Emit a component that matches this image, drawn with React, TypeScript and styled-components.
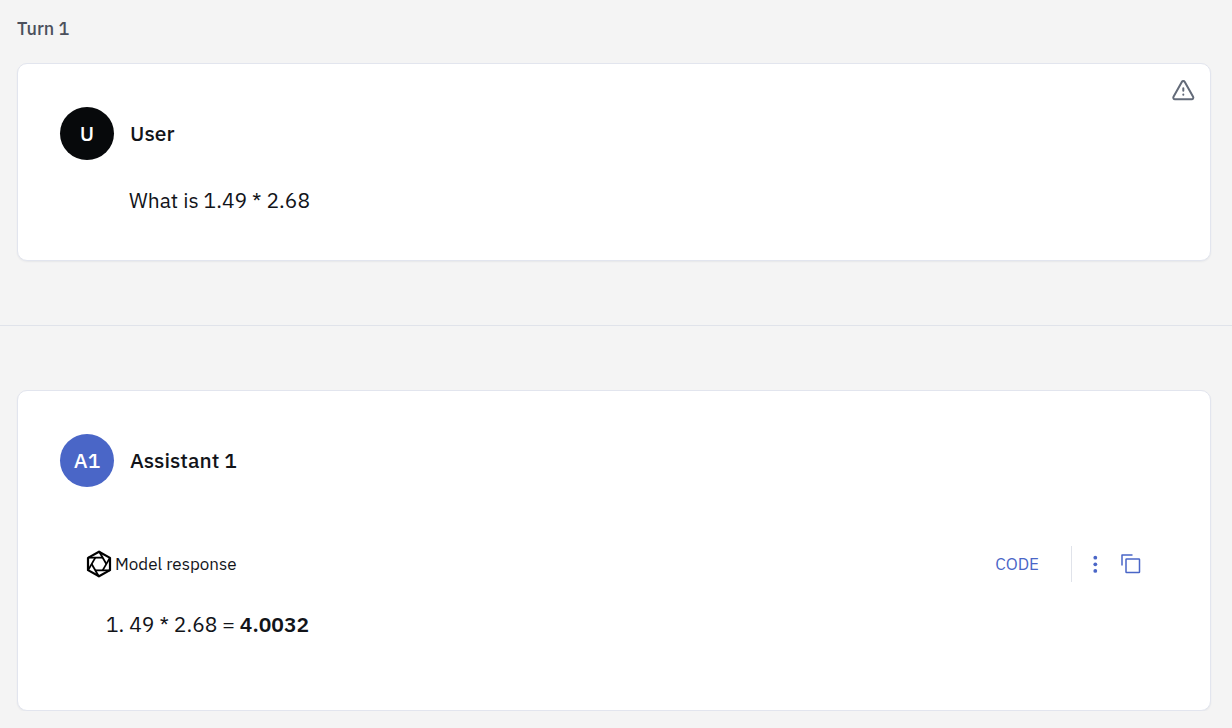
import React from "react";
import styled, { createGlobalStyle } from "styled-components";

const GlobalStyle = createGlobalStyle`
  *, *::before, *::after { box-sizing: border-box; }
  body {
    margin: 0;
    background: #f4f4f4;
    color: #121419;
    font-family: "IBM Plex Sans", "Noto Sans", "Open Sans", sans-serif;
    font-size: 21px;
    line-height: 32px;
  }
  h1, h2, h3, p { margin: 0; font-weight: 400; }
  strong { font-weight: 600; }
`;

const Turn = styled.section`
  padding: 16px 0 0;
`;

const TurnTitle = styled.h1`
  && { font-weight: 500; }
  padding: 0 17px;
  font-size: 18px;
  line-height: 26px;
  color: #4b505c;
`;

const Message = styled.article<{ $tall?: boolean }>`
  position: relative;
  margin: 0 21px 0 17px;
  padding: 43px 42px 42px;
  min-height: ${(p) => (p.$tall ? 321 : 198)}px;
  background: #fff;
  border: 1px solid #e2e5ee;
  border-radius: 10px;
  box-shadow: 0 1px 2px rgba(20, 30, 60, 0.06);
  ${(p) => (p.$tall ? "" : "margin-top: 21px;")}
`;

const Divider = styled.hr`
  margin: 64px 0;
  border: 0;
  border-top: 1px solid #e0e3ea;
`;

const Author = styled.header`
  display: flex;
  align-items: center;
  gap: 16px;
  line-height: 31px;
`;

const Avatar = styled.span<{ $color: string }>`
  display: flex;
  align-items: center;
  justify-content: center;
  width: 54px;
  height: 53px;
  border-radius: 50%;
  background: ${(p) => p.$color};
  color: #fff;
  font-size: 21px;
  font-weight: 500;
`;

const AuthorName = styled.h2`
  && { font-weight: 500; }
  font-size: 21px;
`;

const Prompt = styled.p`
  padding: 24px 0 0 69px;
`;

const IconButton = styled.button`
  display: flex;
  padding: 0;
  border: 0;
  background: none;
  color: #4a66c7;
  cursor: pointer;
`;

const WarningButton = styled(IconButton)`
  position: absolute;
  top: 15px;
  right: 15px;
  color: #636b79;
`;

const ResponseBar = styled.div`
  display: flex;
  align-items: center;
  justify-content: space-between;
  margin-top: 59px;
  padding: 0 27px 0 26px;
  line-height: 31px;
`;

const ResponseTitle = styled.h3`
  display: flex;
  align-items: center;
  gap: 3px;
  font-size: 17px;
`;

const Actions = styled.div`
  display: flex;
  align-items: center;
`;

const CodeButton = styled(IconButton)`
  font: inherit;
  font-size: 17px;
`;

const Separator = styled.span`
  width: 1px;
  height: 36px;
  margin: 0 17px 0 32px;
  background: #e0e3ea;
`;

const MoreButton = styled(IconButton)`
  margin-right: 20px;
`;

const Answer = styled.p`
  padding: 26px 0 0 46px;
`;

const WarningIcon = () => (
  <svg width="24" height="24" viewBox="0 0 24 24" fill="none" stroke="currentColor" strokeWidth="2" strokeLinecap="round" strokeLinejoin="round" aria-hidden="true">
    <path d="M10.8 3 2.5 17.8a1.6 1.6 0 0 0 1.4 2.4h16.8a1.6 1.6 0 0 0 1.4-2.4L13.8 3a1.7 1.7 0 0 0-3 0Z" />
    <path d="M12.3 9.3v2.4M12.3 15.6v.2" />
  </svg>
);

const MoreIcon = () => (
  <svg width="12" height="20" viewBox="0 0 12 20" fill="currentColor" aria-hidden="true">
    <circle cx="6.3" cy="3.7" r="1.9" />
    <circle cx="6.3" cy="10.3" r="1.9" />
    <circle cx="6.3" cy="16.9" r="1.9" />
  </svg>
);

const CopyIcon = () => (
  <svg width="20" height="20" viewBox="0 0 20 20" fill="none" stroke="currentColor" strokeWidth="1.5" strokeLinejoin="round" aria-hidden="true">
    <rect x="5" y="5" width="13.5" height="13.5" rx="0.6" />
    <path d="M1 11.5V1h10.5" />
  </svg>
);

const ModelIcon = () => (
  <svg width="26" height="28" viewBox="-13 -14 26 28" fill="none" stroke="#000" strokeWidth="2.2" strokeLinejoin="round" aria-hidden="true">
    <path d="M0-12.3 11-6.15v12.3L0 12.3-11 6.15v-12.3Z" />
    {[0, 60, 120, 180, 240, 300].map((angle) => (
      <path key={angle} d="M-11-6.35H3.67" strokeWidth="1.8" transform={`rotate(${angle})`} />
    ))}
  </svg>
);

export default function App() {
  return (
    <main>
      <GlobalStyle />
      <Turn>
        <TurnTitle>Turn 1</TurnTitle>
        <Message>
          <WarningButton type="button" aria-label="Report an issue">
            <WarningIcon />
          </WarningButton>
          <Author>
            <Avatar $color="#07090b">U</Avatar>
            <AuthorName>User</AuthorName>
          </Author>
          <Prompt>What is 1.49 * 2.68</Prompt>
        </Message>
        <Divider />
        <Message $tall>
          <Author>
            <Avatar $color="#4a66c7">A1</Avatar>
            <AuthorName>Assistant 1</AuthorName>
          </Author>
          <ResponseBar>
            <ResponseTitle>
              <ModelIcon />
              Model response
            </ResponseTitle>
            <Actions>
              <CodeButton type="button">CODE</CodeButton>
              <Separator />
              <MoreButton type="button" aria-label="More options">
                <MoreIcon />
              </MoreButton>
              <IconButton type="button" aria-label="Copy">
                <CopyIcon />
              </IconButton>
            </Actions>
          </ResponseBar>
          <Answer>
            1. 49 * 2.68 = <strong>4.0032</strong>
          </Answer>
        </Message>
      </Turn>
    </main>
  );
}
